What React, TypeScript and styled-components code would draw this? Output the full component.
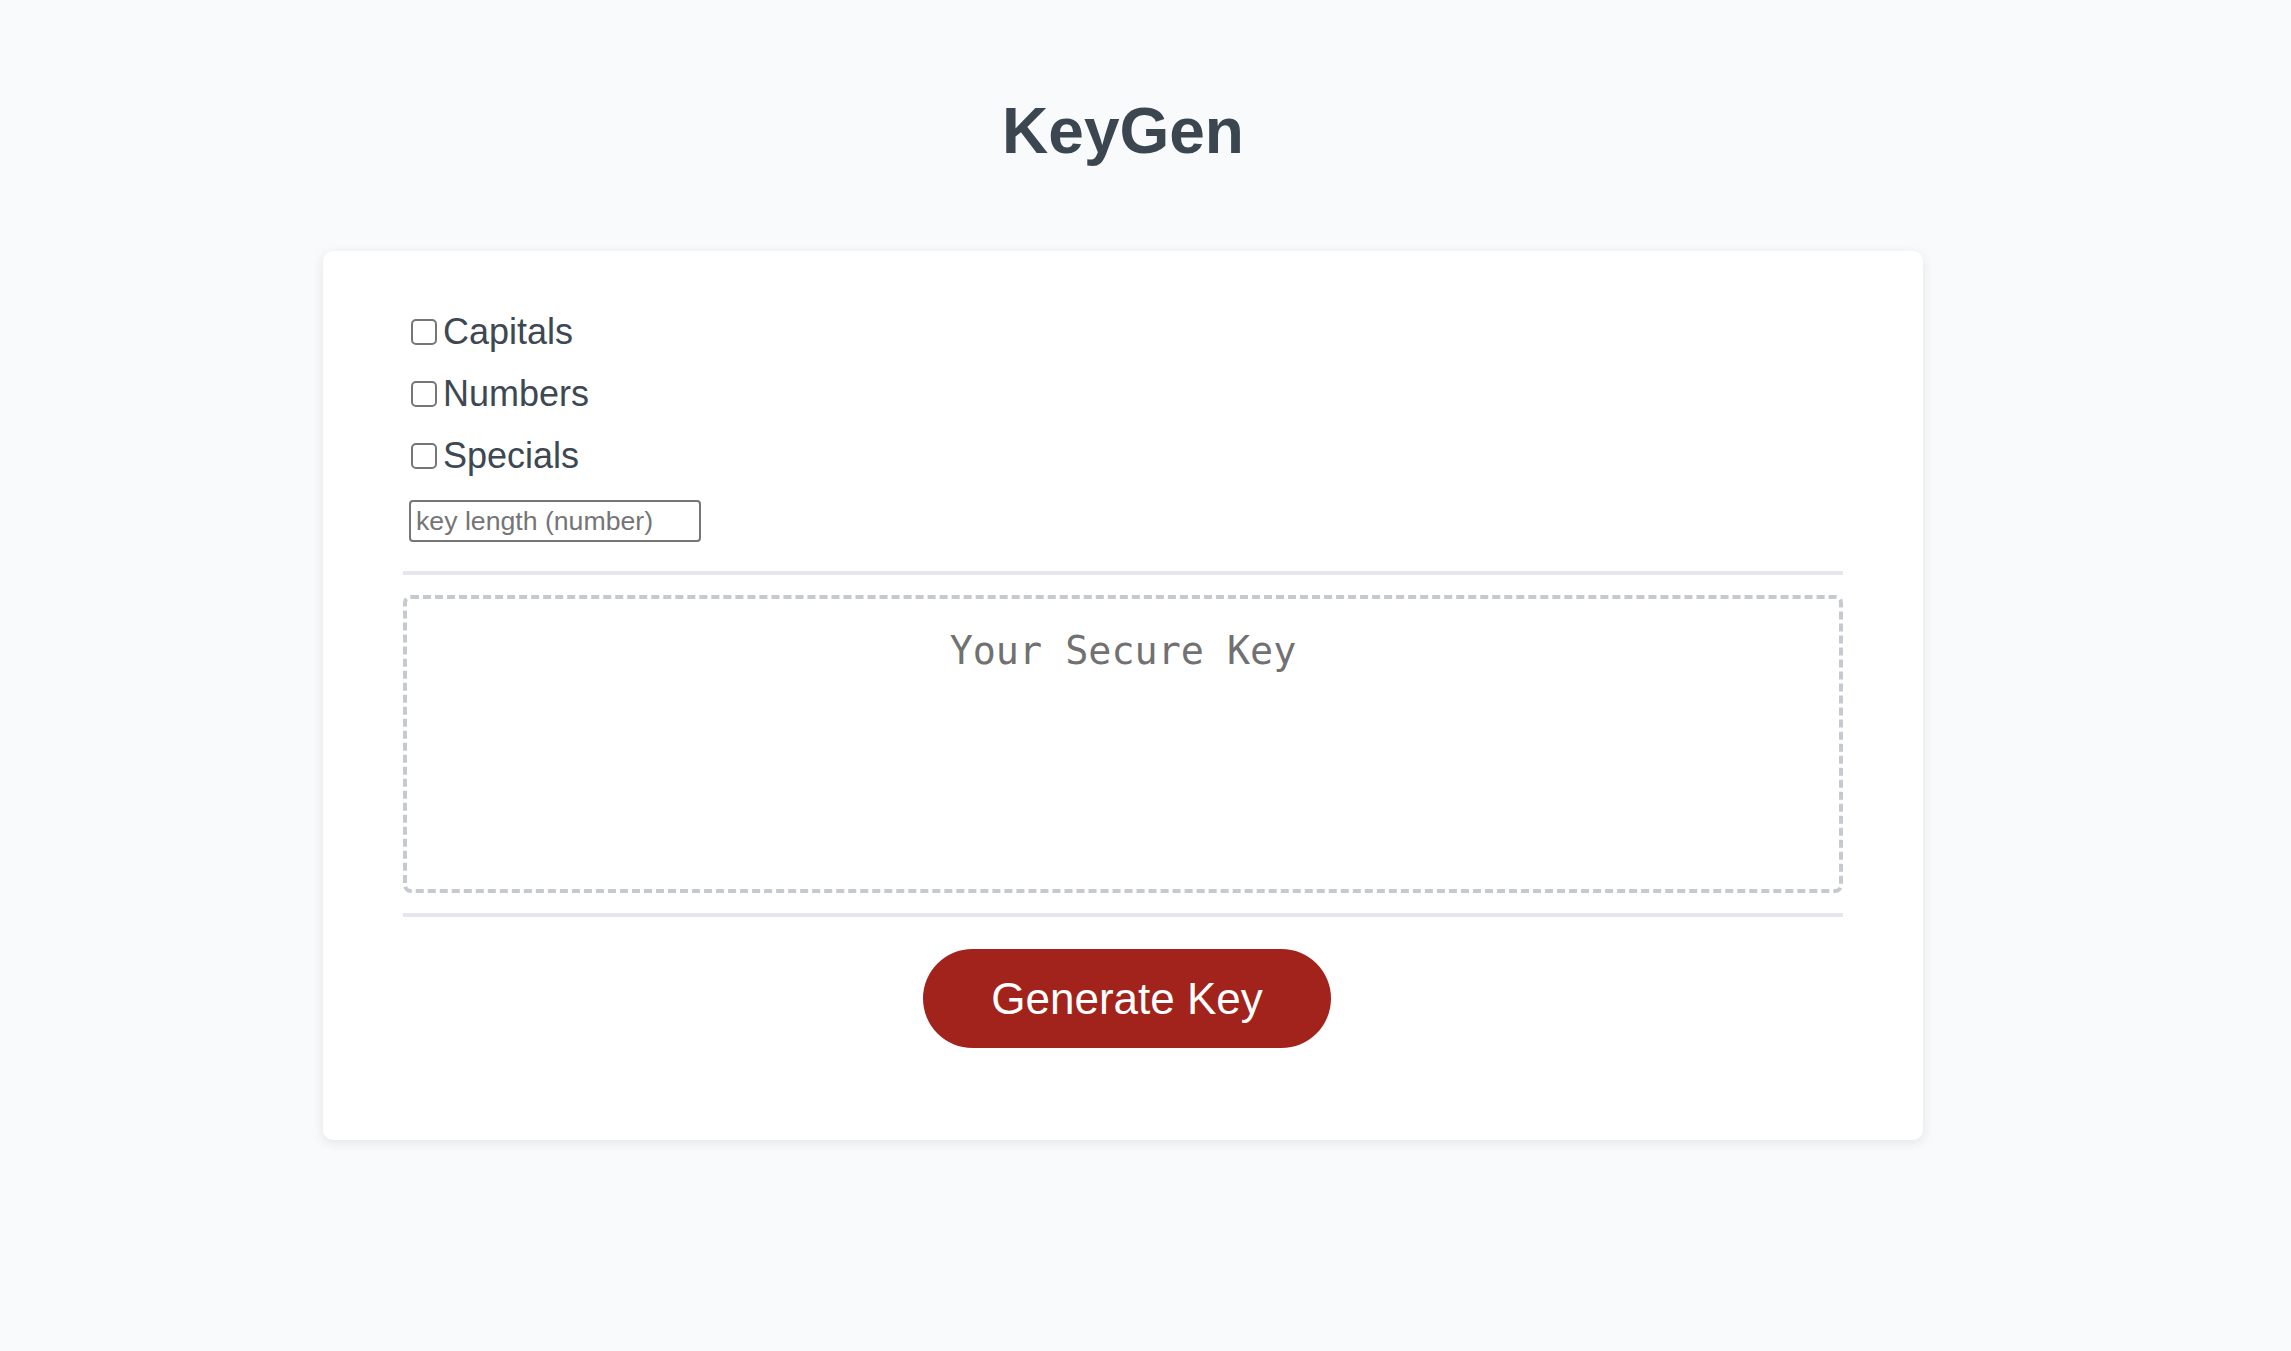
import React from "react";
import styled, { createGlobalStyle } from "styled-components";

const GlobalStyle = createGlobalStyle`
  html, body {
    margin: 0;
    padding: 0;
    background: #f9fafb;
    font-family: "Liberation Sans", Arial, Helvetica, sans-serif;
  }
  * { box-sizing: border-box; }
`;

const Page = styled.div`
  min-height: 100vh;
  padding: 94px 45px 80px 0;
`;

const Title = styled.h1`
  margin: 0 0 83px;
  text-align: center;
  font-size: 64px;
  line-height: 74px;
  font-weight: 700;
  color: #3c4650;
`;

const Card = styled.main`
  width: 1600px;
  margin: 0 auto;
  padding: 60px 80px 92px;
  background: #ffffff;
  border-radius: 10px;
  box-shadow: 0 3px 12px rgba(30, 40, 60, 0.1);
`;

const Options = styled.div`
  display: flex;
  flex-direction: column;
  gap: 20px;
`;

const OptionRow = styled.label`
  display: flex;
  align-items: center;
  height: 42px;
  font-size: 36px;
  color: #3d4852;
`;

const Checkbox = styled.input.attrs({ type: "checkbox" })`
  appearance: none;
  -webkit-appearance: none;
  width: 26px;
  height: 26px;
  margin: 0 6px 0 8px;
  border: 2px solid #767676;
  border-radius: 5px;
  background: #ffffff;
  &:checked {
    background: #1a73e8;
    border-color: #1a73e8;
  }
`;

const LengthInput = styled.input`
  display: block;
  margin: 23px 0 0 6px;
  width: 292px;
  height: 42px;
  border: 2px solid #767676;
  border-radius: 4px;
  padding: 2px 5px;
  font-family: "Liberation Sans", Arial, sans-serif;
  font-size: 26.67px;
  color: #222;
  outline: none;
  &::placeholder {
    color: #757575;
  }
`;

const Divider = styled.div<{ $top: number }>`
  height: 4px;
  margin-top: ${(p) => p.$top}px;
  background: #e6e7ea;
`;

const KeyBox = styled.textarea`
  display: block;
  width: 100%;
  height: 298px;
  margin-top: 20px;
  padding: 29px 20px;
  border: 4px dashed #c5c9d0;
  border-radius: 8px;
  text-align: center;
  font-family: "DejaVu Sans Mono", "Liberation Mono", monospace;
  font-size: 38.4px;
  color: #333;
  resize: none;
  outline: none;
  background: #ffffff;
  &::placeholder {
    color: #717171;
  }
`;

const ButtonRow = styled.div`
  display: flex;
  justify-content: center;
  margin-top: 32px;
`;

const GenerateButton = styled.button`
  width: 408px;
  height: 99px;
  margin-left: 8px;
  border: none;
  border-radius: 50px;
  background: #a1231c;
  color: #ffffff;
  font-family: "Liberation Sans", Arial, sans-serif;
  font-size: 44px;
  cursor: pointer;
`;

const options = ["Capitals", "Numbers", "Specials"];

export default function App() {
  return (
    <>
      <GlobalStyle />
      <Page>
        <Title>KeyGen</Title>
        <Card>
          <Options>
            {options.map((o) => (
              <OptionRow key={o}>
                <Checkbox />
                {o}
              </OptionRow>
            ))}
          </Options>
          <LengthInput type="number" placeholder="key length (number)" />
          <Divider $top={29} />
          <KeyBox readOnly placeholder="Your Secure Key" />
          <Divider $top={20} />
          <ButtonRow>
            <GenerateButton>Generate Key</GenerateButton>
          </ButtonRow>
        </Card>
      </Page>
    </>
  );
}
